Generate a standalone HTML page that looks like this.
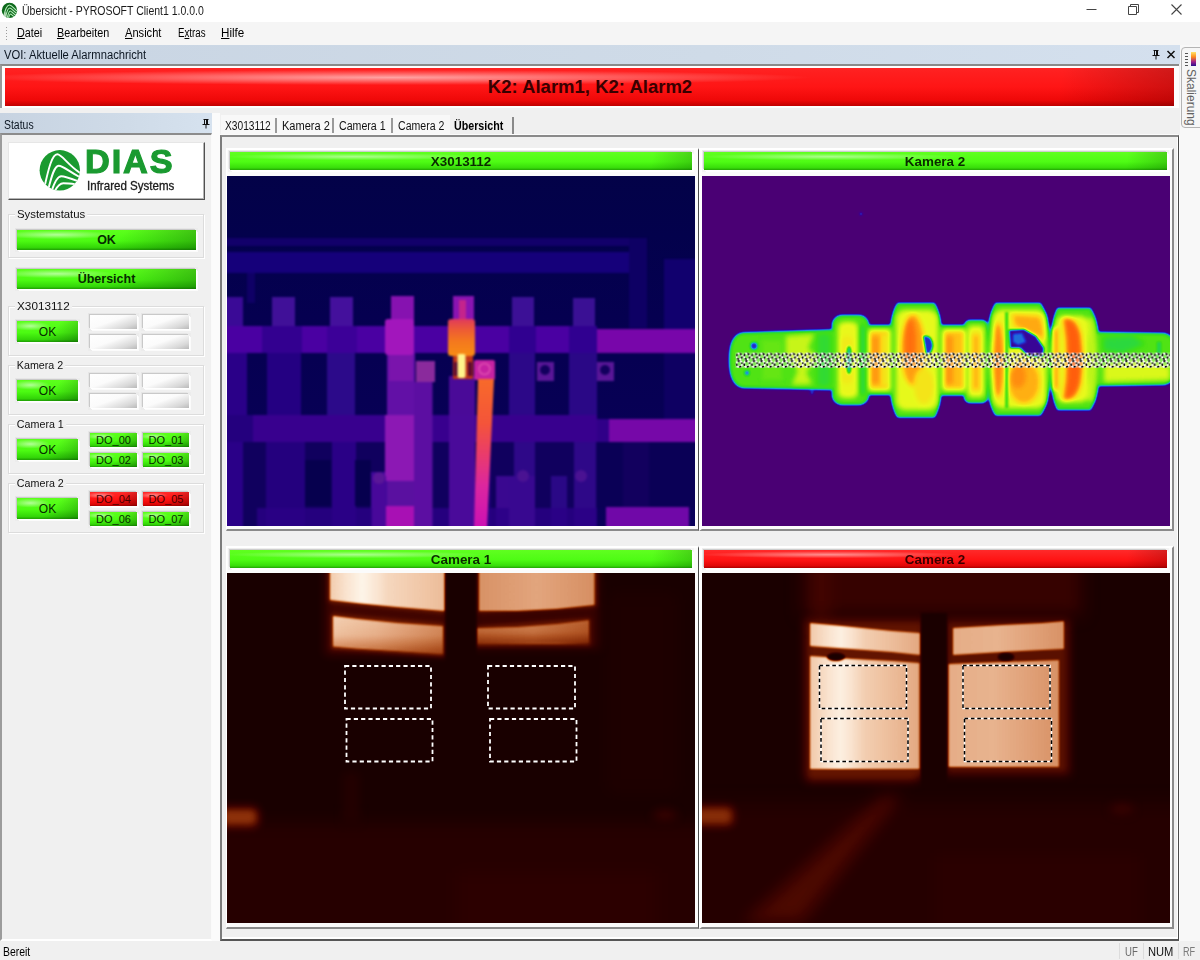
<!DOCTYPE html>
<html><head><meta charset="utf-8">
<style>
*{box-sizing:border-box;margin:0;padding:0}
html,body{width:1200px;height:960px;overflow:hidden;background:#f0f0f0;font-family:"Liberation Sans",sans-serif;font-size:12px;color:#000}
.a{position:absolute}
.t{position:absolute;white-space:nowrap;line-height:1;transform-origin:0 0}
u{text-decoration:underline;text-underline-offset:1px}
.gb{position:absolute;border:1px solid #dcdcdc;box-shadow:1px 1px 0 #fff, inset 1px 1px 0 #fff}
.gl{position:absolute;background:#f0f0f0;padding:0 2px;font-family:"Liberation Sans",sans-serif;font-size:11.5px;line-height:14px;white-space:nowrap;color:#111;transform-origin:0 0;transform:scaleX(.93)}
.btn{position:absolute;text-align:center;font-family:"Liberation Sans",sans-serif;color:#062b00;box-shadow:-1px -1px 0 0 #c9c9c9,-2px -2px 0 0 #e6e6e6,1px 1px 0 0 #fff,2px 2px 0 0 #fbfbfb,2px -2px 0 0 #ececec,-2px 2px 0 0 #ececec}
.g{background:
 radial-gradient(ellipse 32% 22% at 22% 24%,rgba(255,255,255,.55),rgba(255,255,255,0) 100%),
 linear-gradient(135deg,rgba(0,0,0,0) 55%,rgba(0,60,0,.38) 100%),
 linear-gradient(180deg,#5cff1c 0%,#4cfb12 55%,#33d608 88%,#1f9e04 100%)}
.r{background:
 radial-gradient(ellipse 32% 22% at 22% 24%,rgba(255,255,255,.5),rgba(255,255,255,0) 100%),
 linear-gradient(135deg,rgba(0,0,0,0) 55%,rgba(70,0,0,.4) 100%),
 linear-gradient(180deg,#ff2a2a 0%,#ff1212 55%,#e00606 88%,#a80000 100%)}
.w{background:linear-gradient(160deg,#ffffff 0%,#fbfbfb 45%,#d8d8d8 80%,#b9b9b9 100%)}
.sm{font-size:11px;line-height:14px}
.ok{font-size:12px;line-height:22px}
.hd{position:absolute;text-align:center;font-weight:bold;font-size:12px;line-height:20px;color:#0a2a00;box-shadow:-1px -1px 0 0 #cdcdcd,-2px -2px 0 0 #ededed,1px 1px 0 0 #fff,2px 2px 0 0 #fff,2px -2px 0 0 #f4f4f4,-2px 2px 0 0 #f4f4f4}
.g2{background:
 radial-gradient(ellipse 28% 20% at 27% 26%,rgba(255,255,255,.5),rgba(255,255,255,0) 100%),
 linear-gradient(100deg,rgba(0,0,0,0) 91%,rgba(0,60,0,.24) 100%),
 linear-gradient(180deg,#60ff20 0%,#4efc14 55%,#38dc0a 88%,#22a604 100%)}
.r2{background:
 radial-gradient(ellipse 28% 20% at 27% 26%,rgba(255,255,255,.5),rgba(255,255,255,0) 100%),
 linear-gradient(100deg,rgba(0,0,0,0) 91%,rgba(70,0,0,.24) 100%),
 linear-gradient(180deg,#ff2a2a 0%,#ff1414 55%,#e00808 88%,#aa0000 100%)}
.hs{display:inline-block;transform:scaleX(1.12)}
.img{position:absolute;overflow:hidden}
</style></head><body>
<!-- title bar -->
<div class="a" style="left:0;top:0;width:1200px;height:22px;background:#fff"></div>
<svg class="a" style="left:1px;top:2px" width="18" height="18" viewBox="0 0 18 18">
 <defs><clipPath id="ic"><circle cx="8.500" cy="8.400" r="7.700"/></clipPath></defs>
 <circle cx="8.500" cy="8.400" r="7.700" fill="#0e6a1c"/>
 <g clip-path="url(#ic)" stroke="#b8ecbc" fill="none" stroke-width="1.050">
  <path d="M2.500 15 C4 8 6 3 8.500 3 C11 3 13 7 17 9.500"/>
  <path d="M4.500 16 C5.500 10.500 7 6 8.800 6 C10.600 6 12.500 9.500 16.500 11.700"/>
  <path d="M6.200 16.500 C7 12.500 8 9 9.200 9 C10.400 9 12 12 16 14"/>
  <path d="M7.500 16.500 C8 14 8.800 12 9.600 12 C10.400 12 11.500 13.800 14 15.300"/>
  <path d="M2 16 L4.500 9 L5.500 16 Z" fill="#cfe6d0" stroke="none" opacity=".8"/>
 </g>
</svg>
<div class="t" style="left:22px;top:5px;font-size:12px;color:#1a1a1a;transform:scaleX(.875)">Übersicht - PYROSOFT Client1 1.0.0.0</div>
<svg class="a" style="left:1080px;top:0" width="120" height="22" viewBox="0 0 120 22">
 <path d="M6.5 9.500 H16.5" stroke="#444" stroke-width="1" fill="none"/>
 <path d="M48.5 6.500 H56.500 V14.500 H48.500 Z M50.500 6.500 V4.500 H58.500 V12.500 H56.500" stroke="#444" stroke-width="1" fill="none"/>
 <path d="M91.500 4.500 L101.5 14.500 M101.5 4.500 L91.500 14.500" stroke="#444" stroke-width="1.100" fill="none"/>
</svg>
<!-- menu bar -->
<div class="a" style="left:0;top:22px;width:1200px;height:23px;background:#f5f5f5"></div>
<div class="a" style="left:6px;top:27px;width:1px;height:14px;background:repeating-linear-gradient(180deg,#9a9a9a 0 1px,transparent 1px 3px)"></div>
<div class="t" style="left:17px;top:27px;transform:scaleX(.9)"><u>D</u>atei</div>
<div class="t" style="left:57px;top:27px;transform:scaleX(.9)"><u>B</u>earbeiten</div>
<div class="t" style="left:125px;top:27px;transform:scaleX(.925)"><u>A</u>nsicht</div>
<div class="t" style="left:177.500px;top:27px;transform:scaleX(.81)">E<u>x</u>tras</div>
<div class="t" style="left:220.500px;top:27px;transform:scaleX(.97)"><u>H</u>ilfe</div>
<!-- VOI header -->
<div class="a" style="left:0;top:45px;width:1180px;height:19px;background:linear-gradient(90deg,#c9d5e3 0%,#cfdbe8 60%,#d4e0ee 100%)"></div>
<div class="t" style="left:4px;top:49px;font-size:12px;color:#0c1622;transform:scaleX(.935)">VOI: Aktuelle Alarmnachricht</div>
<svg class="a" style="left:1150px;top:47px" width="30" height="15" viewBox="0 0 30 15">
 <path d="M3.500 3.500 H8.500 M4.500 3.500 V8.500 M7.500 3.500 V8.500 M6.500 3.500 V8.500 M2.500 8.500 H9.500 M6 8.500 V12.500" stroke="#111" stroke-width="1" fill="none"/>
 <path d="M17.500 4 L24.500 11 M24.500 4 L17.500 11" stroke="#111" stroke-width="1.500" fill="none"/>
</svg>
<!-- alarm bar -->
<div class="a" style="left:0;top:64px;width:1179px;height:44px;background:#fdfdfd;border-top:2px solid #8a8a8a;border-left:2px solid #9a9a9a"></div>
<div class="a" style="left:5px;top:68px;width:1169px;height:38px;background:
 radial-gradient(ellipse 36% 20% at 33% 25%,rgba(255,255,255,.6),rgba(255,255,255,0) 100%),
 linear-gradient(100deg,rgba(0,0,0,0) 90%,rgba(60,0,0,.26) 100%),
 linear-gradient(180deg,#ff2222 0%,#ff1515 50%,#ee0808 85%,#c00000 100%)"></div>
<div class="t" style="left:0;top:78px;width:1180px;text-align:center;font-size:18.500px;font-weight:bold;color:#380000">K2: Alarm1, K2: Alarm2</div>
<!-- right strip -->
<div class="a" style="left:1180px;top:45px;width:20px;height:896px;background:#f8f8f8"></div>
<div class="a" style="left:1181px;top:47px;width:24px;height:81px;border:1px solid #b4b4b4;border-radius:4px;background:#f6f6f6"></div>
<div class="a" style="left:1191px;top:52px;width:5px;height:14px;background:linear-gradient(180deg,#ffe36a,#ff8a1a 35%,#a0208a 70%,#28108a)"></div>
<div class="a" style="left:1185px;top:53px;width:3px;height:13px;background:repeating-linear-gradient(180deg,#555 0 1px,transparent 1px 3px)"></div>
<div class="t" style="left:1197px;top:69px;font-size:12px;color:#626262;transform-origin:0 0;transform:rotate(90deg)">Skalierung</div>
<!-- status bar -->
<div class="a" style="left:0;top:941px;width:1200px;height:19px;background:#f0f0f0"></div>
<div class="t" style="left:3px;top:946px;transform:scaleX(.87)">Bereit</div>
<div class="a" style="left:1119px;top:943px;width:1px;height:16px;background:#dcdcdc"></div>
<div class="a" style="left:1143px;top:943px;width:1px;height:16px;background:#dcdcdc"></div>
<div class="a" style="left:1178px;top:943px;width:1px;height:16px;background:#dcdcdc"></div>
<div class="t" style="left:1125px;top:946px;color:#6a6a6a;transform:scaleX(.8)">UF</div>
<div class="t" style="left:1148px;top:946px;color:#111;transform:scaleX(.93)">NUM</div>
<div class="t" style="left:1183px;top:946px;color:#7a7a7a;transform:scaleX(.76)">RF</div>

<!-- LEFT PANEL -->
<div class="a" style="left:0;top:113px;width:212px;height:21px;background:linear-gradient(90deg,#c7d3e1 0%,#cfdbe8 60%,#d6e2ef 100%)"></div>
<div class="t" style="left:4px;top:119px;font-size:12px;color:#0c1622;transform:scaleX(.87)">Status</div>
<svg class="a" style="left:200px;top:117px" width="12" height="14" viewBox="0 0 12 14">
 <path d="M3.500 2.500 H8.500 M4.500 2.500 V7.500 M7.500 2.500 V7.500 M6.500 2.500 V7.500 M2.500 7.500 H9.500 M6 7.500 V11.500" stroke="#111" stroke-width="1" fill="none"/>
</svg>
<div class="a" style="left:0;top:133px;width:212px;height:808px;border-top:2px solid #8c8c8c;border-left:2px solid #9c9c9c;border-right:1px solid #fafafa;border-bottom:2px solid #fff;background:#f0f0f0"></div>
<div class="a" style="left:212px;top:113px;width:8px;height:828px;background:#fbfbfb"></div>
<!-- logo -->
<div class="a" style="left:8px;top:142px;width:197px;height:58px;background:#fff;border-top:1px solid #e6e6e6;border-left:1px solid #e6e6e6;border-right:1px solid #505050;border-bottom:1px solid #505050;box-shadow:inset -1px -1px 0 #b4b4b4"></div>
<svg class="a" style="left:38px;top:149px" width="44" height="44" viewBox="0 0 44 44">
 <defs><clipPath id="lc"><circle cx="21.800" cy="21.300" r="20.200"/></clipPath></defs>
 <circle cx="21.800" cy="21.300" r="20.200" fill="#1a9a30"/>
 <g clip-path="url(#lc)" stroke="#fff" fill="none" stroke-width="1.900" stroke-linecap="butt">
  <path d="M6.700 37 C10.500 20 14 5.300 19.300 5.300 C24 5.300 30 16.500 44 25.200"/>
  <path d="M10 41.500 C13.500 27 16.500 16.700 20.700 16.700 C25 16.700 31 22.500 43 28.800"/>
  <path d="M13.300 43 C16.500 33 19.500 27.300 23.300 27.300 C27 27.300 32 29.200 41 32.500"/>
  <path d="M16 43.500 C19 37.500 22 34.300 25.300 34.300 C29 34.300 32 34.600 38 35.400"/>
 </g>
</svg>
<div class="t" style="left:85px;top:146px;font-size:32.500px;font-weight:bold;color:#1a9a30;letter-spacing:1.800px;-webkit-text-stroke:1.100px #1a9a30;transform:scaleX(1.055)">DIAS</div>
<div class="t" style="left:87px;top:180px;font-size:12.500px;color:#1a1a1a;-webkit-text-stroke:.3px #1a1a1a;transform:scaleX(.925)">Infrared Systems</div>

<!-- Systemstatus -->
<div class="gb" style="left:8px;top:214px;width:196px;height:44px"></div>
<div class="gl" style="left:15px;top:207px;transform:scaleX(.99)">Systemstatus</div>
<div class="btn g" style="left:17px;top:230px;width:179px;height:20px;font-weight:bold;font-size:12.500px;line-height:20px">OK</div>
<div class="btn g" style="left:17px;top:269px;width:179px;height:20px;font-weight:bold;font-size:12.500px;line-height:20px">Übersicht</div>

<!-- group X3013112 -->
<div class="gb" style="left:8px;top:306px;width:196px;height:50px"></div>
<div class="gl" style="left:14.500px;top:299px;transform:scaleX(1.02)">X3013112</div>
<div class="btn g ok" style="left:17px;top:321px;width:61px;height:21px">OK</div>
<div class="btn w" style="left:90px;top:315px;width:47px;height:14px"></div>
<div class="btn w" style="left:143px;top:315px;width:46px;height:14px"></div>
<div class="btn w" style="left:90px;top:335px;width:47px;height:14px"></div>
<div class="btn w" style="left:143px;top:335px;width:46px;height:14px"></div>
<!-- group Kamera 2 -->
<div class="gb" style="left:8px;top:365px;width:196px;height:50px"></div>
<div class="gl" style="left:15px;top:358px">Kamera 2</div>
<div class="btn g ok" style="left:17px;top:380px;width:61px;height:21px">OK</div>
<div class="btn w" style="left:90px;top:374px;width:47px;height:14px"></div>
<div class="btn w" style="left:143px;top:374px;width:46px;height:14px"></div>
<div class="btn w" style="left:90px;top:394px;width:47px;height:14px"></div>
<div class="btn w" style="left:143px;top:394px;width:46px;height:14px"></div>
<!-- group Camera 1 -->
<div class="gb" style="left:8px;top:424px;width:196px;height:50px"></div>
<div class="gl" style="left:15px;top:417px">Camera 1</div>
<div class="btn g ok" style="left:17px;top:439px;width:61px;height:21px">OK</div>
<div class="btn g sm" style="left:90px;top:433px;width:47px;height:14px">DO_00</div>
<div class="btn g sm" style="left:143px;top:433px;width:46px;height:14px">DO_01</div>
<div class="btn g sm" style="left:90px;top:453px;width:47px;height:14px">DO_02</div>
<div class="btn g sm" style="left:143px;top:453px;width:46px;height:14px">DO_03</div>
<!-- group Camera 2 -->
<div class="gb" style="left:8px;top:483px;width:196px;height:50px"></div>
<div class="gl" style="left:15px;top:476px">Camera 2</div>
<div class="btn g ok" style="left:17px;top:498px;width:61px;height:21px">OK</div>
<div class="btn r sm" style="left:90px;top:492px;width:47px;height:14px;color:#4a0000">DO_04</div>
<div class="btn r sm" style="left:143px;top:492px;width:46px;height:14px;color:#4a0000">DO_05</div>
<div class="btn g sm" style="left:90px;top:512px;width:47px;height:14px">DO_06</div>
<div class="btn g sm" style="left:143px;top:512px;width:46px;height:14px">DO_07</div>

<!-- TABS -->
<div class="a" style="left:221px;top:115px;width:229px;height:20px;background:#f8f8f8"></div>
<div class="t" style="left:225px;top:120px;color:#111;transform:scaleX(.85)">X3013112</div>
<div class="a" style="left:275px;top:118px;width:2px;height:15px;background:#9a9a9a"></div>
<div class="t" style="left:281.500px;top:120px;color:#111;transform:scaleX(.92)">Kamera 2</div>
<div class="a" style="left:332px;top:118px;width:2px;height:15px;background:#9a9a9a"></div>
<div class="t" style="left:339px;top:120px;color:#111;transform:scaleX(.885)">Camera 1</div>
<div class="a" style="left:391px;top:118px;width:2px;height:15px;background:#9a9a9a"></div>
<div class="t" style="left:398px;top:120px;color:#111;transform:scaleX(.88)">Camera 2</div>
<div class="t" style="left:454px;top:120px;color:#000;font-weight:bold;transform:scaleX(.89)">Übersicht</div>
<div class="a" style="left:512px;top:117px;width:2px;height:17px;background:#8a8a8a"></div>

<!-- MAIN FRAME -->
<div class="a" style="left:220px;top:134px;width:958px;height:1px;background:#fbfbfb"></div>
<div class="a" style="left:220px;top:135px;width:959px;height:806px;border-top:2px solid #8a8a8a;border-left:2px solid #7c7c7c;border-right:1px solid #4a4a4a;border-bottom:2px solid #555;background:#f0f0f0;box-shadow:inset -1px -2px 0 0 #fff"></div>
<div class="a" style="left:1179px;top:135px;width:1px;height:806px;background:#fdfdfd"></div>
<!-- panel frames -->
<div class="a" style="left:226px;top:148px;width:473px;height:383px;border-top:2px solid #fff;border-left:1px solid #fff;border-right:1px solid #4c4c4c;border-bottom:2px solid #8a8a8a;background:#fbfbfb"></div>
<div class="a" style="left:699px;top:148px;width:475px;height:383px;border-top:2px solid #fff;border-left:3px solid #fff;border-right:2px solid #8a8a8a;border-bottom:2px solid #8a8a8a;background:#fbfbfb"></div>
<div class="a" style="left:226px;top:546px;width:473px;height:383px;border-top:2px solid #fff;border-left:1px solid #fff;border-right:1px solid #4c4c4c;border-bottom:2px solid #8a8a8a;background:#fbfbfb"></div>
<div class="a" style="left:699px;top:546px;width:475px;height:383px;border-top:2px solid #fff;border-left:3px solid #fff;border-right:2px solid #8a8a8a;border-bottom:2px solid #8a8a8a;background:#fbfbfb"></div>
<!-- header bars -->
<div class="hd g2" style="left:230px;top:152px;width:462px;height:18px"><span class="hs">X3013112</span></div>
<div class="hd g2" style="left:704px;top:152px;width:463px;height:18px"><span class="hs">Kamera 2</span></div>
<div class="hd g2" style="left:230px;top:550px;width:462px;height:18px"><span class="hs">Camera 1</span></div>
<div class="hd r2" style="left:704px;top:550px;width:463px;height:18px;color:#3a0000"><span class="hs">Camera 2</span></div>
<!--IMG1-->
<svg class="a" style="left:227px;top:176px" width="468" height="350" viewBox="0 0 468 350">
<defs>
 <filter id="b1" x="-2%" y="-2%" width="104%" height="104%" color-interpolation-filters="sRGB"><feGaussianBlur stdDeviation="1.1"/></filter>
 <linearGradient id="i1bg" x1="0" y1="0" x2="0" y2="1"><stop offset="0" stop-color="#030248"/><stop offset=".17" stop-color="#03014c"/><stop offset=".4" stop-color="#050050"/><stop offset="1" stop-color="#0a005a"/></linearGradient>
 <linearGradient id="i1hot" x1="0" y1="0" x2="0" y2="1"><stop offset="0" stop-color="#e03a5c"/><stop offset=".3" stop-color="#ee5c34"/><stop offset=".6" stop-color="#f4781e"/><stop offset="1" stop-color="#f88c14"/></linearGradient>
 <linearGradient id="i1cab" x1="0" y1="0" x2="0" y2="1"><stop offset="0" stop-color="#f86a2a"/><stop offset=".3" stop-color="#f4543a"/><stop offset=".5" stop-color="#ea3c6a"/><stop offset=".72" stop-color="#dc26a0"/><stop offset="1" stop-color="#cc10b4"/></linearGradient>
</defs>
<rect width="468" height="350" fill="url(#i1bg)"/>
<g filter="url(#b1)">
 <!-- upper bands -->
 <rect x="-5" y="62" width="419" height="8" fill="#12006a"/>
 <rect x="-5" y="76" width="425" height="21" fill="#15007a"/>
 <rect x="402" y="62" width="18" height="90" fill="#0e0064"/>
 <rect x="437" y="83" width="40" height="70" fill="#11006e"/>
 <rect x="20" y="97" width="8" height="30" fill="#0f0066"/>
 <!-- column tops -->
 <rect x="-5" y="121" width="21" height="30" fill="#3a0a96"/>
 <rect x="45" y="121" width="23" height="30" fill="#401098"/>
 <rect x="103" y="121" width="23" height="30" fill="#44109c"/>
 <rect x="164" y="120" width="23" height="28" fill="#8612b0"/>
 <rect x="226" y="120" width="21" height="26" fill="#8a14b2"/>
 <rect x="232" y="124" width="7" height="22" fill="#c4248c"/>
 <rect x="285" y="121" width="22" height="30" fill="#3c1096"/>
 <rect x="346" y="122" width="22" height="29" fill="#3a1094"/>
 <!-- bus bar 1 -->
 <rect x="-5" y="150" width="375" height="27" fill="#4a00a2"/>
 <rect x="35" y="150" width="40" height="27" fill="#330090"/>
 <rect x="100" y="150" width="30" height="27" fill="#3c0098"/>
 <rect x="282" y="150" width="27" height="27" fill="#300090"/>
 <rect x="342" y="150" width="28" height="27" fill="#300090"/>
 <rect x="370" y="153" width="105" height="24" fill="#7806aa"/>
 <!-- mid zone columns -->
 <rect x="-5" y="177" width="25" height="62" fill="#2a0088"/>
 <rect x="40" y="177" width="34" height="62" fill="#240082"/>
 <rect x="100" y="177" width="28" height="62" fill="#2c0a8a"/>
 <rect x="160" y="177" width="28" height="62" fill="#6210a6"/>
 <rect x="222" y="200" width="26" height="39" fill="#4a0a98"/>
 <rect x="282" y="177" width="26" height="62" fill="#2c0888"/>
 <rect x="342" y="177" width="28" height="62" fill="#2a0886"/>
 <rect x="437" y="177" width="40" height="66" fill="#0e0062"/>
 <!-- bus bar 2 -->
 <rect x="26" y="239" width="344" height="27" fill="#38008e"/>
 <rect x="-5" y="239" width="31" height="27" fill="#24007e"/>
 <rect x="382" y="243" width="95" height="23" fill="#7608a8"/>
 <rect x="370" y="243" width="12" height="23" fill="#300088"/>
 <!-- lower zone -->
 <rect x="-5" y="266" width="375" height="90" fill="#10005e"/>
 <rect x="-5" y="266" width="21" height="90" fill="#2a0088"/>
 <rect x="39" y="266" width="39" height="90" fill="#24007e"/>
 <rect x="105" y="266" width="24" height="90" fill="#2a0086"/>
 <rect x="144" y="296" width="16" height="60" fill="#40089a"/>
 <rect x="250" y="266" width="14" height="90" fill="#1c0074"/>
 <rect x="269" y="300" width="16" height="56" fill="#3a0890"/>
 <rect x="287" y="266" width="21" height="90" fill="#2e0888"/>
 <rect x="324" y="300" width="16" height="56" fill="#2a0886"/>
 <rect x="347" y="266" width="22" height="90" fill="#2e0888"/>
 <rect x="78" y="284" width="26" height="46" fill="#06004e"/>
 <rect x="128" y="284" width="16" height="46" fill="#06004e"/>
 <rect x="370" y="266" width="110" height="66" fill="#0a0056"/>
 <rect x="396" y="266" width="26" height="66" fill="#12005e"/>
 <rect x="30" y="332" width="340" height="24" fill="#2a0086" fill-opacity=".8"/>
 <rect x="379" y="331" width="83" height="24" fill="#7008a8"/>
 <!-- c3 lower -->
 <rect x="158" y="239" width="29" height="66" fill="#8c18b4"/>
 <rect x="160" y="305" width="27" height="25" fill="#5a10a0"/>
 <rect x="158" y="330" width="30" height="25" fill="#a810b4"/>
 <rect x="222" y="239" width="26" height="116" fill="#4a0a9a"/>
 <!-- purple cable -->
 <rect x="187" y="206" width="18.500" height="150" fill="#5c0ea2"/>
 <rect x="145" y="300" width="14" height="55" fill="#48089a"/>
 <rect x="282" y="300" width="26" height="55" fill="#380890"/>
 <!-- nuts -->
 <rect x="189" y="185" width="19" height="21" fill="#8a2a9c"/>
 <rect x="310" y="186" width="17" height="19" fill="#5a1698"/>
 <rect x="370" y="186" width="17" height="19" fill="#5a1698"/>
 <circle cx="318" cy="194" r="5" fill="#12005e"/>
 <circle cx="378" cy="194" r="5" fill="#12005e"/>
 <circle cx="152" cy="302" r="6" fill="#5a1698"/>
 <circle cx="296" cy="300" r="6" fill="#4a1292"/>
 <circle cx="354" cy="300" r="6" fill="#4a1292"/>
 <!-- c3 body -->
 <rect x="158" y="143" width="29" height="36" rx="3" fill="#a216bc"/>
 <rect x="162" y="179" width="24" height="26" fill="#7a14ac"/>
 <!-- hot column -->
 <rect x="221" y="143" width="27" height="37" rx="3" fill="url(#i1hot)"/>
 <rect x="226" y="180" width="20" height="23" fill="#c03418"/>
 <rect x="227" y="186" width="4" height="14" fill="#5a0830"/>
 <rect x="241" y="186" width="4" height="14" fill="#5a0830"/>
 <rect x="230.500" y="178" width="8" height="24" rx="2" fill="#fff48c"/>
 <rect x="247" y="184" width="21" height="20" rx="2" fill="#c622a2"/>
 <circle cx="257.500" cy="193" r="5.500" fill="none" stroke="#e050b0" stroke-width="1.500"/>
 <polygon points="251,203 267,203 260,352 247,352" fill="url(#i1cab)"/>
</g>
</svg>
<!--IMG2-->
<svg class="a" style="left:702px;top:176px" width="468" height="350" viewBox="0 0 468 350">
<defs>
 <filter id="cm2" x="0" y="0" width="100%" height="100%" color-interpolation-filters="sRGB">
  <feGaussianBlur stdDeviation="0.9"/>
  <feComponentTransfer>
   <feFuncR type="table" tableValues="0.294 0.235 0.118 0.118 0.118 0.255 0.600 0.910 1.000 1.000 1.000"/>
   <feFuncG type="table" tableValues="0.000 0.000 0.235 0.620 0.830 0.880 0.940 0.980 0.820 0.540 0.280"/>
   <feFuncB type="table" tableValues="0.455 0.560 0.860 0.860 0.350 0.080 0.080 0.110 0.080 0.060 0.040"/>
  </feComponentTransfer>
 </filter>
 <filter id="b2" x="-10%" y="-10%" width="120%" height="120%" color-interpolation-filters="sRGB"><feGaussianBlur stdDeviation="2"/></filter>
 <filter id="b2s" x="-10%" y="-10%" width="120%" height="120%" color-interpolation-filters="sRGB"><feGaussianBlur stdDeviation="1.1"/></filter>
 <pattern id="roi2" x="33.500" y="176.500" width="7.600" height="15.500" patternUnits="userSpaceOnUse">
  <rect x="0" y="0" width="7.600" height="15.500" fill="#fff" fill-opacity=".28"/>
  <ellipse cx="3.800" cy="4" rx="2.700" ry="3" fill="none" stroke="#fff" stroke-width="1.700"/>
  <ellipse cx="3.800" cy="11.500" rx="2.700" ry="3" fill="none" stroke="#fff" stroke-width="1.700"/>
  <ellipse cx="3.800" cy="4" rx="2.700" ry="3" fill="none" stroke="#000" stroke-width="1.700" stroke-dasharray="2.200 2.350"/>
  <ellipse cx="3.800" cy="11.500" rx="2.700" ry="3" fill="none" stroke="#000" stroke-width="1.700" stroke-dasharray="2.200 2.350" stroke-dashoffset="2.200"/>
 </pattern>
 <g id="sil2">
  <path d="M41 157.500 L131 154.500 L131 213 L41 211 Q28 209 28 184 Q28 159 41 157.500 Z"/>
  <rect x="131" y="140" width="35" height="88" rx="9"/>
  <rect x="164" y="150" width="26" height="68"/>
  <path d="M196 128 L232 128 Q240 140 240 184 Q240 228 232 240.500 L196 240.500 Q187.500 228 187.500 184 Q187.500 140 196 128 Z"/>
  <rect x="238" y="150" width="27" height="68.500"/>
  <rect x="263" y="145" width="22" height="81" rx="5"/>
  <path d="M294 128 L338 128 Q348 142 348 184 Q348 226 338 238.500 L294 238.500 Q285 226 285 184 Q285 142 294 128 Z"/>
  <path d="M356 133 L388 133 Q397 146 397 183 Q397 220 388 233 L356 233 Q349 220 349 183 Q349 146 356 133 Z"/>
  <path d="M396 157 L462 158 Q474 160 474 183 Q474 206 462 208 L396 209 Z"/>
 </g>
</defs>
<g filter="url(#cm2)">
 <rect x="-5" y="-5" width="478" height="360" fill="#000"/>
 <use href="#sil2" fill="#3c3c3c" stroke="#3c3c3c" stroke-width="3.400" stroke-linejoin="round"/>
 <use href="#sil2" fill="#6c6c6c" stroke="#6c6c6c" stroke-width="1" stroke-linejoin="round"/>
 <g filter="url(#b2s)"><use href="#sil2" fill="#848484" stroke="#848484" stroke-width="0" transform=""/></g>
 <g filter="url(#b2)">
  <!-- left shaft texture -->
  <path d="M84 160 L112 158 L106 172 L116 182 L104 196 L110 208 L90 209 L96 194 L84 180 Z" fill="#a8a8a8"/>
  <rect x="60" y="164" width="20" height="40" fill="#8a8a8a"/>
  <rect x="116" y="158" width="12" height="52" fill="#747474"/>
  <!-- disc1 -->
  <rect x="136" y="146" width="20" height="76" rx="6" fill="#b4b4b4"/>
  <rect x="139" y="160" width="12" height="48" rx="5" fill="#bcbcbc"/>
  <rect x="158" y="150" width="5" height="68" fill="#6c6c6c"/>
  <!-- neck1 -->
  <rect x="167" y="154" width="21" height="60" fill="#d0d0d0"/>
  <rect x="168" y="160" width="10" height="48" fill="#e0e0e0"/>
  <rect x="180" y="158" width="6" height="52" fill="#bcbcbc"/>
  <!-- disc2 -->
  <rect x="194" y="134" width="42" height="100" rx="9" fill="#b2b2b2"/>
  <ellipse cx="211" cy="174" rx="12" ry="36" fill="#dedede"/>
  <ellipse cx="208" cy="166" rx="6" ry="24" fill="#f0f0f0"/>
  <ellipse cx="222" cy="210" rx="10" ry="18" fill="#c0c0c0"/>
  <!-- neck2 -->
  <rect x="241" y="154" width="22" height="60" fill="#d2d2d2"/>
  <rect x="243" y="160" width="8" height="48" fill="#e2e2e2"/>
  <!-- small disc -->
  <rect x="266" y="150" width="16" height="71" rx="4" fill="#b6b6b6"/>
  <rect x="270" y="158" width="8" height="56" fill="#d6d6d6"/>
  <!-- disc3 -->
  <rect x="291" y="134" width="53" height="98" rx="9" fill="#b4b4b4"/>
  <ellipse cx="296" cy="184" rx="6" ry="38" fill="#e6e6e6"/>
  <path d="M310 138 L338 140 Q343 150 343 164 L312 150 Z" fill="#dadada"/>
  <ellipse cx="322" cy="206" rx="16" ry="22" fill="#d8d8d8"/>
  <ellipse cx="316" cy="200" rx="8" ry="12" fill="#e4e4e4"/>
  <!-- disc4 -->
  <rect x="354" y="140" width="32" height="86" rx="8" fill="#b4b4b4"/>
  <path d="M361 142 Q375 140 379 160 Q382 184 379 206 Q375 226 361 224 Q368 184 361 142 Z" fill="#f6f6f6"/>
  <rect x="351" y="152" width="5" height="62" fill="#e8e8e8"/>
  <path d="M385 142 L391 142 Q395 160 395 183 Q395 210 391 225 L385 225 Q389 184 385 142 Z" fill="#a6a6a6"/>
  <!-- right shaft -->
  <path d="M402 188 L440 185 L468 190 L468 204 L402 206 Z" fill="#aeaeae"/>
  <path d="M402 162 L430 160 L442 168 L420 177 L402 174 Z" fill="#707070"/>
 </g>
 <!-- crisp details -->
 <rect x="303" y="136" width="3.400" height="96" fill="#7c7c7c"/>
 <path d="M307 154 L322 153 L334 160 L342 172 L341 181 L326 180 L318 172 L308 172 Z" fill="#1c1c1c"/>
 <path d="M311 158 L320 157 L324 166 L316 169 L311 166 Z" fill="#404040"/>
 <path d="M221 160 Q230 158 231 170 Q229 180 224 178 Z" fill="#2e2e2e"/>
 <circle cx="52" cy="170" r="3.400" fill="#2c2c2c"/>
 <circle cx="45" cy="197" r="2.400" fill="#404040"/>
 <circle cx="110" cy="216.500" r="2.200" fill="#303030"/>
 <circle cx="159" cy="38" r="1.400" fill="#4c4c4c"/>
 <rect x="455" y="166" width="4" height="14" fill="#6a6a6a"/>
 <ellipse cx="147" cy="184" rx="3" ry="14" fill="#5a5a5a"/>
</g>
<rect x="33.500" y="176.500" width="440" height="15.500" fill="url(#roi2)"/>
</svg>
<!--/IMG2-->
<!--IMG3-->
<svg class="a" style="left:227px;top:573px" width="468" height="350" viewBox="0 0 468 350">
<defs>
 <filter id="cm3" x="0" y="0" width="100%" height="100%" color-interpolation-filters="sRGB">
  <feGaussianBlur stdDeviation="1.3"/>
  <feComponentTransfer>
   <feFuncR type="table" tableValues="0.070 0.150 0.250 0.390 0.550 0.690 0.800 0.880 0.940 0.980 1.000"/>
   <feFuncG type="table" tableValues="0.000 0.000 0.015 0.080 0.190 0.330 0.490 0.630 0.770 0.890 0.980"/>
   <feFuncB type="table" tableValues="0.000 0.000 0.000 0.000 0.040 0.140 0.300 0.470 0.640 0.810 0.940"/>
  </feComponentTransfer>
 </filter>
 <filter id="bl4" x="-10%" y="-10%" width="120%" height="120%" color-interpolation-filters="sRGB"><feGaussianBlur stdDeviation="4"/></filter>
 <filter id="bl8" x="-10%" y="-10%" width="120%" height="120%" color-interpolation-filters="sRGB"><feGaussianBlur stdDeviation="8"/></filter>
 <linearGradient id="w3a" x1="0" y1="0" x2="1" y2="0"><stop offset="0" stop-color="#d2d2d2"/><stop offset=".28" stop-color="#fafafa"/><stop offset=".5" stop-color="#dcdcdc"/><stop offset="1" stop-color="#c6c6c6"/></linearGradient>
 <linearGradient id="w3b" x1="0" y1="0" x2="1" y2="0"><stop offset="0" stop-color="#d6d6d6"/><stop offset=".4" stop-color="#c8c8c8"/><stop offset="1" stop-color="#a6a6a6"/></linearGradient>
 <linearGradient id="w3v" x1="0" y1="0" x2="0" y2="1"><stop offset="0" stop-color="#000" stop-opacity="0"/><stop offset=".5" stop-color="#000" stop-opacity=".06"/><stop offset="1" stop-color="#000" stop-opacity=".32"/></linearGradient>
 <linearGradient id="w3c" x1="0" y1="0" x2="1" y2="0"><stop offset="0" stop-color="#a8a8a8"/><stop offset=".5" stop-color="#b6b6b6"/><stop offset="1" stop-color="#a6a6a6"/></linearGradient>
 <linearGradient id="w3d" x1="0" y1="0" x2="1" y2="0"><stop offset="0" stop-color="#929292"/><stop offset=".5" stop-color="#9c9c9c"/><stop offset="1" stop-color="#868686"/></linearGradient>
</defs>
<g filter="url(#cm3)">
 <rect x="-5" y="-5" width="478" height="360" fill="#0a0a0a"/>
 <g filter="url(#bl8)">
  <rect x="-20" y="250" width="520" height="120" fill="#1a1a1a"/>
  <rect x="230" y="300" width="200" height="60" fill="#202020"/>
  <rect x="380" y="20" width="70" height="200" fill="#101010"/>
 </g>
 <g filter="url(#bl4)">
  <rect x="98" y="-10" width="124" height="92" fill="#343434"/>
  <rect x="246" y="-10" width="126" height="86" fill="#2c2c2c"/>
  <rect x="-8" y="234" width="40" height="20" rx="6" fill="#686868"/>
  <ellipse cx="438" cy="242" rx="12" ry="6" fill="#2a2a2a"/>
  <rect x="116" y="200" width="16" height="50" fill="#161616"/>
 </g>
 <g filter="url(#b2)"><polygon points="101,-5 219,-5 219,40 101,29" fill="#5a5a5a"/><polygon points="104,41 218,51 218,84 104,76" fill="#5a5a5a"/><polygon points="250,-5 370,-5 370,34 250,40" fill="#525252"/><polygon points="248,53 364,45 364,73 248,74" fill="#525252"/></g>
 <rect x="218.500" y="-5" width="31" height="100" fill="#0a0a0a"/>
 <polygon points="103,-5 217.500,-5 217.500,38 170,34 130,30 103,27" fill="url(#w3a)"/>
 <polygon points="106,43 130,46 170,50 216,53 216,81 170,78 130,75.500 106,73.500" fill="url(#w3b)"/>
 <polygon points="252,-5 367.500,-5 367.500,32 330,36 290,38 252,38" fill="url(#w3c)"/>
 <polygon points="250,55 290,54 330,51 362,47 362,70 330,71 250,71" fill="url(#w3d)"/>
 <polygon points="106,43 216,53 216,81 106,73.500" fill="url(#w3v)"/>
 <polygon points="250,55 362,47 362,70 250,71" fill="url(#w3v)"/>
</g>
<g fill="none" stroke="#fff" stroke-width="1.800" stroke-dasharray="4.200 3.100">
 <rect x="118" y="93" width="86" height="42.500"/>
 <rect x="119.500" y="146" width="86" height="42.500"/>
 <rect x="261" y="93" width="87" height="42.500"/>
 <rect x="263" y="146" width="86.500" height="42.500"/>
</g>
</svg>
<!--/IMG3-->
<svg class="a" style="left:702px;top:573px" width="468" height="350" viewBox="0 0 468 350">
<defs>
 <linearGradient id="w4a" x1="0" y1="0" x2="1" y2="0"><stop offset="0" stop-color="#d0d0d0"/><stop offset=".28" stop-color="#f4f4f4"/><stop offset=".5" stop-color="#d4d4d4"/><stop offset=".8" stop-color="#c4c4c4"/><stop offset="1" stop-color="#b8b8b8"/></linearGradient>
 <linearGradient id="w4b" x1="0" y1="0" x2="1" y2="0"><stop offset="0" stop-color="#bcbcbc"/><stop offset=".4" stop-color="#c0c0c0"/><stop offset="1" stop-color="#a8a8a8"/></linearGradient>
</defs>
<g filter="url(#cm3)">
 <rect x="-5" y="-5" width="478" height="360" fill="#0b0b0b"/>
 <g filter="url(#bl8)">
  <rect x="100" y="-20" width="280" height="62" fill="#2a2a2a"/>
  <rect x="112" y="-10" width="14" height="60" fill="#3a3a3a"/>
  <rect x="-20" y="230" width="520" height="140" fill="#181818"/>
  <polygon points="40,350 180,222 200,222 100,350" fill="#3c3c3c"/>
  <rect x="230" y="280" width="210" height="80" fill="#1e1e1e"/>
 </g>
 <g filter="url(#bl4)">
  <rect x="102" y="46" width="122" height="158" fill="#4c4c4c"/>
  <rect x="242" y="46" width="126" height="156" fill="#464646"/>
  <rect x="-8" y="233" width="40" height="20" rx="6" fill="#646464"/>
  <ellipse cx="420" cy="236" rx="12" ry="6" fill="#2a2a2a"/>
  <rect x="104" y="201" width="112" height="8" fill="#505050"/>
 </g>
 <rect x="219" y="40" width="26" height="175" fill="#0b0b0b"/>
 <polygon points="108,50 150,54 190,58 218,60 218,82 190,79 150,76 108,73" fill="url(#w4a)"/>
 <polygon points="108,83 150,86 190,88 217.500,90 217.500,196 108,196" fill="url(#w4a)"/>
 <polygon points="251,55 300,52 340,50 362,48 362,76 340,77 300,79 251,82" fill="url(#w4b)"/>
 <polygon points="246.500,91 300,89 357,87 357,194 246.500,194" fill="url(#w4b)"/>
 <ellipse cx="134" cy="84" rx="9" ry="4" fill="#0b0b0b"/>
 <ellipse cx="304" cy="84" rx="8" ry="4" fill="#0b0b0b"/>
</g>
<g fill="none" stroke="#fff" stroke-width="1.500">
 <rect x="117.500" y="92.500" width="87" height="43"/>
 <rect x="119" y="145.500" width="87" height="43"/>
 <rect x="261" y="92.500" width="87" height="43"/>
 <rect x="262.500" y="145.500" width="87" height="43"/>
</g>
<g fill="none" stroke="#000" stroke-width="1.500" stroke-dasharray="3.600 2.800">
 <rect x="117.500" y="92.500" width="87" height="43"/>
 <rect x="119" y="145.500" width="87" height="43"/>
 <rect x="261" y="92.500" width="87" height="43"/>
 <rect x="262.500" y="145.500" width="87" height="43"/>
</g>
</svg>
<!--/IMG4-->

</body></html>
